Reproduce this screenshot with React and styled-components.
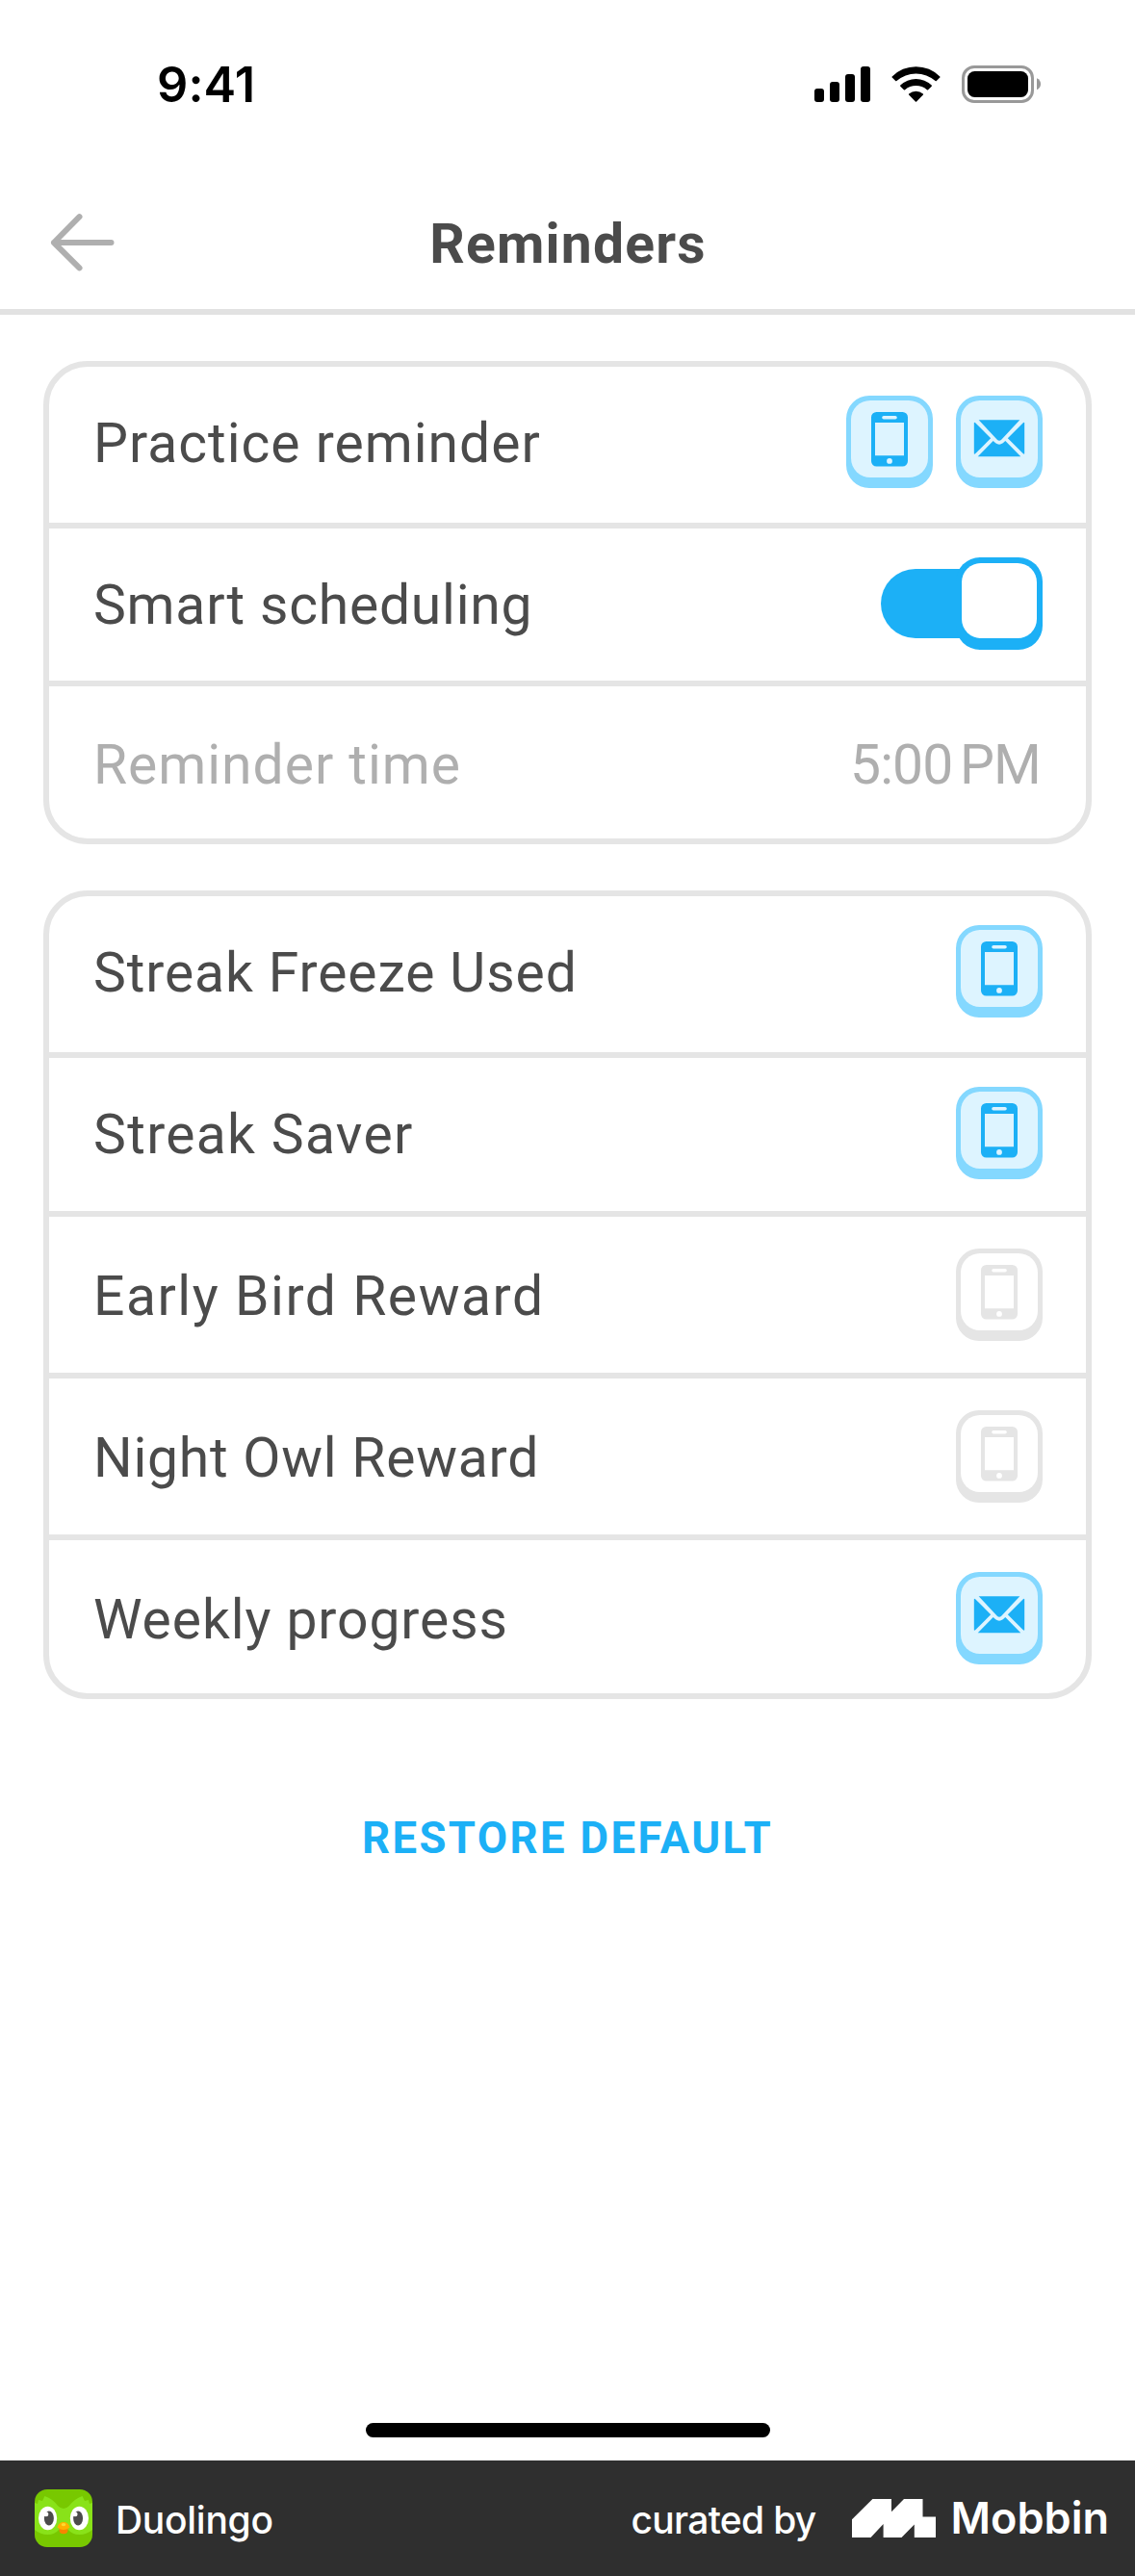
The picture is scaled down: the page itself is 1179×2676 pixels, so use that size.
import React from "react";
import styled, { createGlobalStyle } from "styled-components";

const GlobalStyle = createGlobalStyle`
  *, *::before, *::after { box-sizing: border-box; }
  body { margin: 0; background: #fff; }
  svg { display: block; flex: none; }
`;

const Screen = styled.div`
  width: 1179px;
  height: 2676px;
  display: flex;
  flex-direction: column;
  background: #fff;
  color: #4b4b4b;
  font-family: Roboto, "Open Sans", sans-serif;
  overflow: hidden;
`;

const StatusBar = styled.div`
  height: 175px;
  padding: 0 98px 0 163px;
  display: flex;
  align-items: center;
  justify-content: space-between;
`;

const Clock = styled.span`
  font: 600 50.5px/60px Inter, sans-serif;
  letter-spacing: 0.1px;
  color: #000;
`;

const StatusIcons = styled.div`
  display: flex;
  align-items: center;
  gap: 22px;
`;

const Header = styled.header`
  height: 152px;
  padding: 9px 49px 0;
  display: grid;
  grid-template-columns: 120px 1fr 120px;
  align-items: center;
  border-bottom: 6px solid #e2e2e2;
`;

const BackButton = styled.button`
  padding: 0 0 2px;
  border: 0;
  background: none;
`;

const Title = styled.h1`
  margin: 0;
  padding: 3px 0 0 1px;
  text-align: center;
  font-size: 57px;
  line-height: 68px;
  font-weight: 700;
  letter-spacing: 1.2px;
`;

const Main = styled.main`
  flex: 1;
  padding: 48px 45px 0;
  display: flex;
  flex-direction: column;
  gap: 48px;
`;

const Card = styled.section`
  border: 6px solid #e5e5e5;
  border-radius: 46px;
`;

const Row = styled.div`
  box-sizing: content-box;
  height: ${(p) => p.$height - p.$top}px;
  padding: ${(p) => p.$top}px 45px 0 46px;
  display: flex;
  align-items: flex-start;
  justify-content: space-between;
  color: ${(p) => (p.$muted ? "#afafaf" : "#4b4b4b")};

  & + & { border-top: 6px solid #e5e5e5; }
`;

const Label = styled.span`
  font-size: 57px;
  line-height: 99px;
  letter-spacing: ${(p) => p.$spacing}px;
  white-space: nowrap;
`;

const Value = styled(Label)`
  margin-right: 2px;
  word-spacing: -5.5px;
`;

const Actions = styled.div`
  display: flex;
  gap: 24px;
`;

const Tile = styled.button`
  width: 90px;
  height: 96px;
  padding: 0;
  border: 5px solid ${(p) => (p.$on ? "#84d8ff" : "#e5e5e5")};
  border-bottom-width: 11px;
  border-radius: 24px;
  background: ${(p) => (p.$on ? "#84d8ff" : "#e5e5e5")};
  color: ${(p) => (p.$on ? "#1cb0f6" : "#e5e5e5")};
`;

const TileFace = styled.span`
  display: flex;
  align-items: center;
  justify-content: center;
  width: 80px;
  height: 80px;
  border-radius: 20px;
  background: ${(p) => (p.$on ? "#ddf4ff" : "#fff")};
`;

const Track = styled.div`
  width: 168px;
  height: 72px;
  margin-top: 12px;
  border-radius: 36px 20px 20px 36px;
  background: #1cb0f6;
  display: flex;
  align-items: center;
  justify-content: flex-end;
`;

const Thumb = styled.span`
  flex: none;
  width: 90px;
  height: 96px;
  padding: 6px;
  border-radius: 25px;
  background: #1cb0f6;
`;

const ThumbFace = styled.span`
  display: block;
  width: 78px;
  height: 78px;
  border-radius: 20px;
  background: #fff;
`;

const RestoreButton = styled.button`
  align-self: center;
  margin-top: 67px;
  padding: 0;
  border: 0;
  background: none;
  color: #1cb0f6;
  font: 700 45.5px/60px Roboto, sans-serif;
  letter-spacing: 2.35px;
`;

const HomeIndicator = styled.div`
  align-self: center;
  width: 420px;
  height: 15px;
  margin-bottom: 24px;
  border-radius: 8px;
  background: #000;
`;

const Footer = styled.footer`
  height: 120px;
  padding: 0 27px 0 36px;
  display: flex;
  align-items: center;
  justify-content: space-between;
  background: #2f2f2f;
  color: #fff;
  font-family: Inter, sans-serif;
`;

const FooterGroup = styled.div`
  display: flex;
  align-items: center;
`;

const FooterText = styled.span`
  padding-top: 3px;
  margin-left: ${(p) => p.$left || 0}px;
  margin-right: ${(p) => p.$right || 0}px;
  font-size: 39px;
  line-height: 48px;
  font-weight: 500;
  letter-spacing: ${(p) => p.$spacing}px;
`;

const Brand = styled.span`
  margin-left: 16px;
  font-size: 45px;
  line-height: 54px;
  font-weight: 600;
`;

const SignalIcon = () => (
  <svg width="58" height="37" viewBox="0 0 58 37">
    <rect x="0" y="23" width="10" height="14" rx="3" />
    <rect x="16" y="16" width="10" height="21" rx="3" />
    <rect x="32" y="8" width="10" height="29" rx="3" />
    <rect x="48" y="0" width="10" height="37" rx="3" />
  </svg>
);

const WifiIcon = () => (
  <svg width="51" height="37" viewBox="0 0 50.6 37">
    <path d="M0.5 10.6A34.6 34.6 0 0 1 50.1 10.6Q50.6 11.1 50.1 11.6L46.6 15.1Q46 15.6 45.4 15.1A30.5 30.5 0 0 0 5.2 15.1Q4.6 15.6 4 15.1L.5 11.6Q0 11.1 .5 10.6Z" />
    <path d="M9.1 19.5A23.4 23.4 0 0 1 41.5 19.5Q42 20.1 41.5 20.7L37.9 24.3Q37.3 24.9 36.7 24.3A17.6 17.6 0 0 0 13.9 24.3Q13.3 24.9 12.7 24.3L9.1 20.7Q8.6 20.1 9.1 19.5Z" />
    <path d="M17.9 28.4A11.6 11.6 0 0 1 32.7 28.4Q33.2 29 32.7 29.6L25.9 36.5Q25.3 37.1 24.7 36.5L17.9 29.6Q17.4 29 17.9 28.4Z" />
  </svg>
);

const BatteryIcon = () => (
  <svg width="82" height="39" viewBox="0 0 82 39">
    <rect x="1.5" y="1.5" width="72" height="36" rx="11.5" fill="none" stroke="#999" strokeWidth="3" />
    <rect x="6" y="6" width="63" height="27" rx="7.5" />
    <path d="M78 13.3Q82 15.2 82 19.3T78 25.3Z" fill="#999" />
  </svg>
);

const BackIcon = () => (
  <svg width="72" height="64" viewBox="0 0 72 64" fill="none" stroke="#afafaf" strokeWidth="6" strokeLinecap="round" strokeLinejoin="round">
    <path d="M66.5 32H7M33.500 5.200L7 32L33.500 58.400" />
  </svg>
);

const PhoneIcon = () => (
  <svg width="38" height="57" viewBox="0 0 38 57" fill="currentColor" fillRule="evenodd">
    <path d="M5.5 0H32.5A5.5 5.5 0 0 1 38 5.5V51A5.5 5.5 0 0 1 32.5 56.5H5.5A5.5 5.5 0 0 1 0 51V5.5A5.5 5.5 0 0 1 5.5 0ZM13 4A1.8 1.8 0 0 0 13 7.6H25A1.8 1.8 0 0 0 25 4ZM4 11V45.3H34V11ZM19 48A2.9 2.9 0 1 0 19 53.8A2.9 2.9 0 1 0 19 48Z" />
  </svg>
);

const MailIcon = () => (
  <svg width="54" height="41" viewBox="0 0 54 41" fill="currentColor">
    <path d="M5.7 .3H48.3L29.2 20.7Q27 22.8 24.8 20.7Z" />
    <path d="M.8 3.7Q.8 2 2.4 3.5L18.2 19.3L2.4 35.1Q.8 36.5 .8 34.8Z" />
    <path d="M53.2 3.7Q53.2 2 51.6 3.5L35.8 19.3L51.6 35.1Q53.2 36.5 53.2 34.8Z" />
    <path d="M4.7 38.3L20.7 22.1L23.2 24.3Q27 27.2 30.8 24.3L33.3 22.1L49.3 38.3Z" />
  </svg>
);

const OwlIcon = () => (
  <svg width="60" height="60" viewBox="0 0 60 60">
    <defs><clipPath id="owl"><rect width="60" height="60" rx="13" /></clipPath></defs>
    <g clipPath="url(#owl)">
      <rect width="60" height="60" fill="#78c800" />
      <path d="M0 14L3 15L4 11L8 12L10.5 7Q19 10 24 17Q27 20 30 20T36 17Q41 10 49.5 7L52 12L56 11L57 15L60 14V42Q54 47 46.5 47Q39 47 35 42H25Q21 47 13.5 47Q6 47 0 42Z" fill="#89e219" />
      <ellipse cx="13.6" cy="30" rx="9.6" ry="12.2" fill="#fff" />
      <ellipse cx="46.4" cy="30" rx="9.6" ry="12.2" fill="#fff" />
      <ellipse cx="14.9" cy="30" rx="5" ry="7.5" fill="#4b4b4b" />
      <ellipse cx="45.1" cy="30" rx="5" ry="7.5" fill="#4b4b4b" />
      <circle cx="11.8" cy="25.7" r="2.5" fill="#fff" />
      <circle cx="42" cy="25.7" r="2.5" fill="#fff" />
      <path d="M25.5 40H34.5V42Q34.5 46.3 30 46.3T25.5 42Z" fill="#f78500" />
      <path d="M23.5 39.5Q25 34 30 34T36.5 39.5Q33 42 30 42T23.5 39.5Z" fill="#ffb100" />
      <ellipse cx="30" cy="36.6" rx="2.3" ry="1.6" fill="#ffda2f" />
    </g>
  </svg>
);

const MobbinIcon = () => (
  <svg width="87" height="40" viewBox="0 0 87 40" fill="#fff">
    <path d="M0 21.3L21.4 0H41V13.3L54 0H73.5V18.5H87V40H64.8V26.6L51.5 40H32.6V26L19.5 40H0Z" />
  </svg>
);

const channelIcons = { phone: PhoneIcon, mail: MailIcon };

const ChannelTile = ({ channel, on }) => {
  const Icon = channelIcons[channel];
  return (
    <Tile $on={on} aria-label={channel} aria-pressed={on}>
      <TileFace $on={on}><Icon /></TileFace>
    </Tile>
  );
};

const notifications = [
  { label: "Streak Freeze Used", channel: "phone", on: true, spacing: 0.9, height: 162, top: 30 },
  { label: "Streak Saver", channel: "phone", on: true, spacing: 1.32, height: 159, top: 30 },
  { label: "Early Bird Reward", channel: "phone", on: false, spacing: 1.55, height: 162, top: 33 },
  { label: "Night Owl Reward", channel: "phone", on: false, spacing: 0.76, height: 162, top: 33 },
  { label: "Weekly progress", channel: "mail", on: true, spacing: 0.91, height: 159, top: 33 },
];

export default function App() {
  return (
    <Screen>
      <GlobalStyle />
      <StatusBar>
        <Clock>9:41</Clock>
        <StatusIcons>
          <SignalIcon />
          <WifiIcon />
          <BatteryIcon />
        </StatusIcons>
      </StatusBar>
      <Header>
        <BackButton aria-label="Back"><BackIcon /></BackButton>
        <Title>Reminders</Title>
      </Header>
      <Main>
        <Card>
          <Row $height={162} $top={30}>
            <Label $spacing={1}>Practice reminder</Label>
            <Actions>
              <ChannelTile channel="phone" on />
              <ChannelTile channel="mail" on />
            </Actions>
          </Row>
          <Row $height={158} $top={30}>
            <Label $spacing={0.77}>Smart scheduling</Label>
            <Track role="switch" aria-checked="true"><Thumb><ThumbFace /></Thumb></Track>
          </Row>
          <Row $height={158} $top={32} $muted>
            <Label $spacing={0.98}>Reminder time</Label>
            <Value $spacing={-0.9}>5:00 PM</Value>
          </Row>
        </Card>
        <Card>
          {notifications.map((n) => (
            <Row key={n.label} $height={n.height} $top={n.top}>
              <Label $spacing={n.spacing}>{n.label}</Label>
              <ChannelTile channel={n.channel} on={n.on} />
            </Row>
          ))}
        </Card>
        <RestoreButton>RESTORE DEFAULT</RestoreButton>
      </Main>
      <HomeIndicator />
      <Footer>
        <FooterGroup>
          <OwlIcon />
          <FooterText $left={24} $spacing={-0.28}>Duolingo</FooterText>
        </FooterGroup>
        <FooterGroup>
          <FooterText $right={37} $spacing={-0.69}>curated by</FooterText>
          <MobbinIcon />
          <Brand>Mobbin</Brand>
        </FooterGroup>
      </Footer>
    </Screen>
  );
}
